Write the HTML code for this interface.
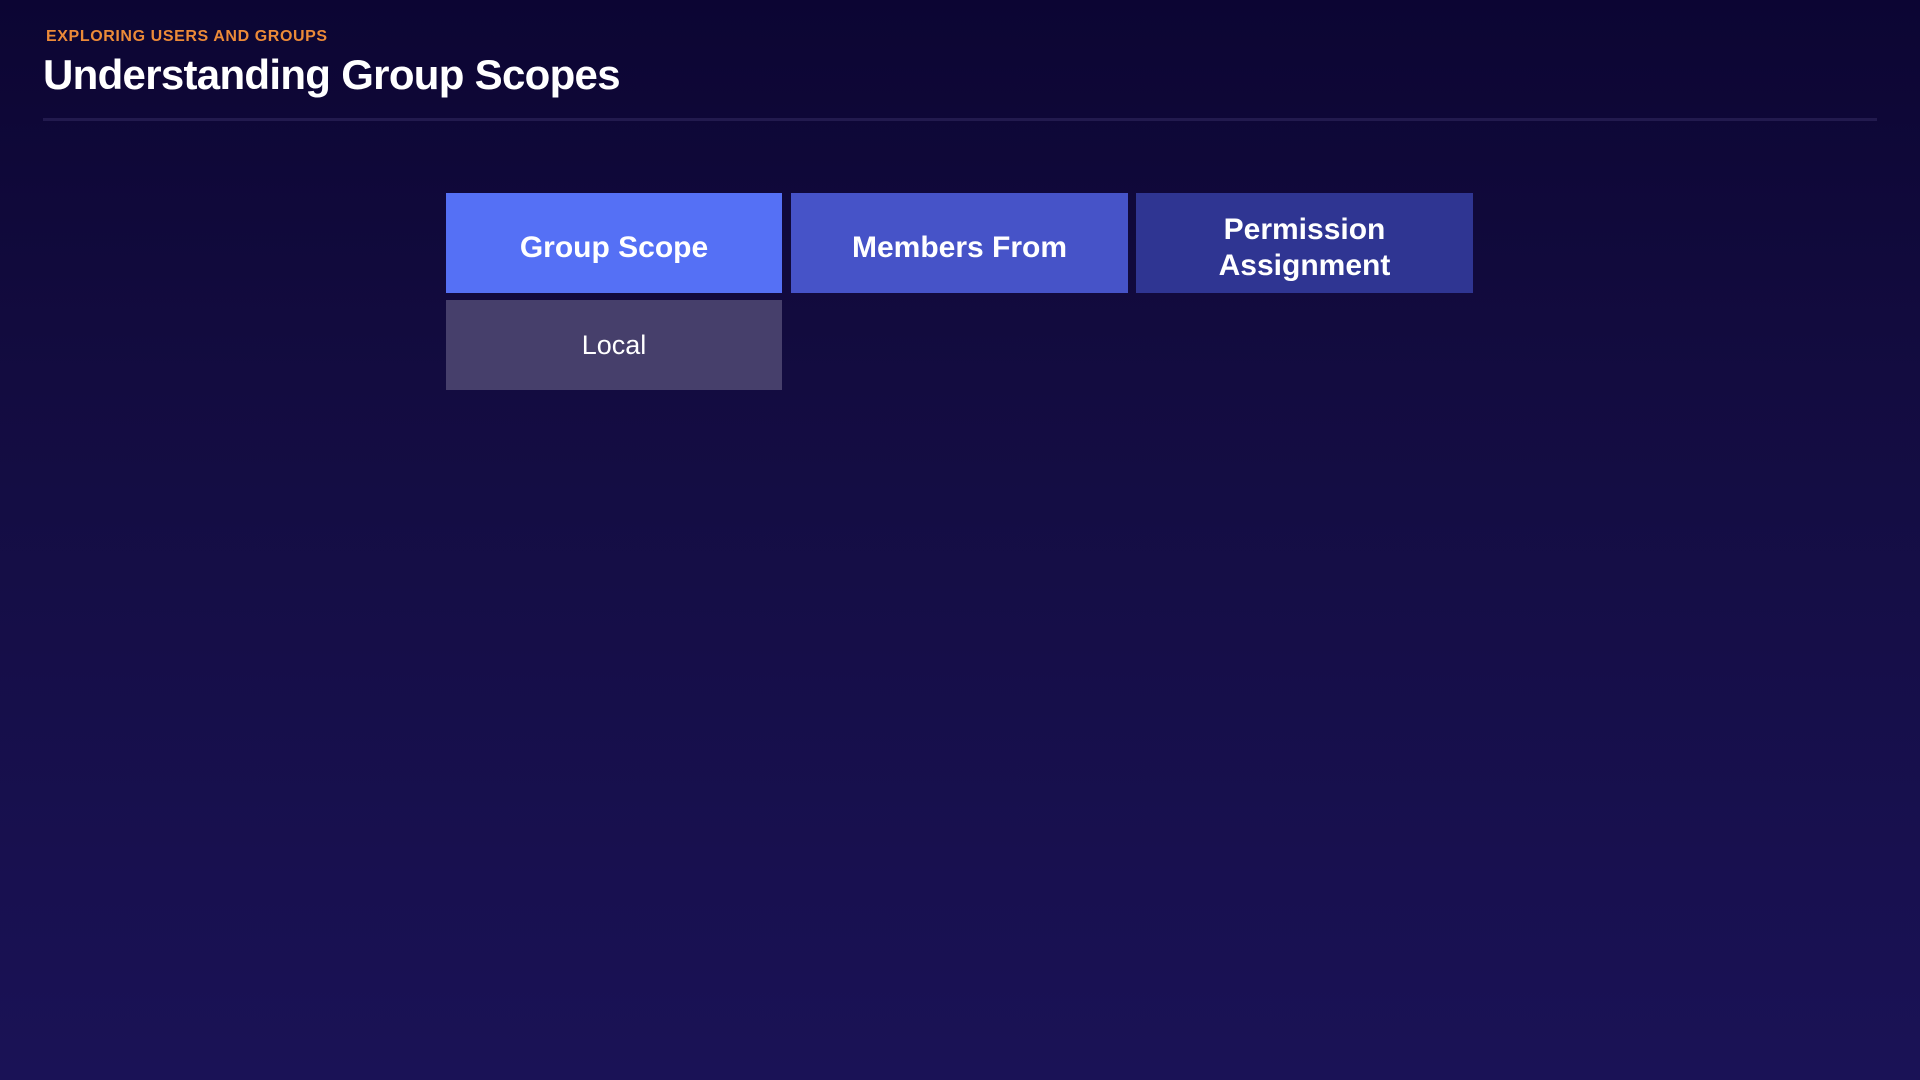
<!DOCTYPE html>
<html><head><meta charset="utf-8"><style>
html,body{margin:0;padding:0}
body{width:1920px;height:1080px;overflow:hidden;position:relative;font-family:"Liberation Sans",sans-serif;
background:linear-gradient(180deg,#0c0533 0%,#130c40 35%,#1a1256 100%);}
.sub{position:absolute;left:46px;top:28px;font-size:16px;font-weight:bold;color:#ec8a38;letter-spacing:0.6px}
.title{position:absolute;left:43px;top:51px;font-size:42px;font-weight:bold;color:#fff;letter-spacing:-0.7px}
.line{position:absolute;left:43px;top:118px;width:1834px;height:3px;background:#221a4e}
.b{position:absolute;display:flex;align-items:center;justify-content:center;text-align:center;color:#fff;font-weight:bold;font-size:30px;line-height:36px;box-sizing:border-box}
.h{padding-top:10px}
</style></head><body>
<div class="sub">EXPLORING USERS AND GROUPS</div>
<div class="title">Understanding Group Scopes</div>
<div class="line"></div>
<div class="b h" style="left:446px;top:193px;width:336px;height:100px;background:#5570f5">Group Scope</div>
<div class="b h" style="left:791px;top:193px;width:337px;height:100px;background:#4653c8">Members From</div>
<div class="b h" style="left:1136px;top:193px;width:337px;height:100px;background:#2f3592">Permission<br>Assignment</div>
<div class="b" style="left:446px;top:300px;width:336px;height:90px;background:#463f6b;font-weight:normal;font-size:27px">Local</div>
</body></html>
